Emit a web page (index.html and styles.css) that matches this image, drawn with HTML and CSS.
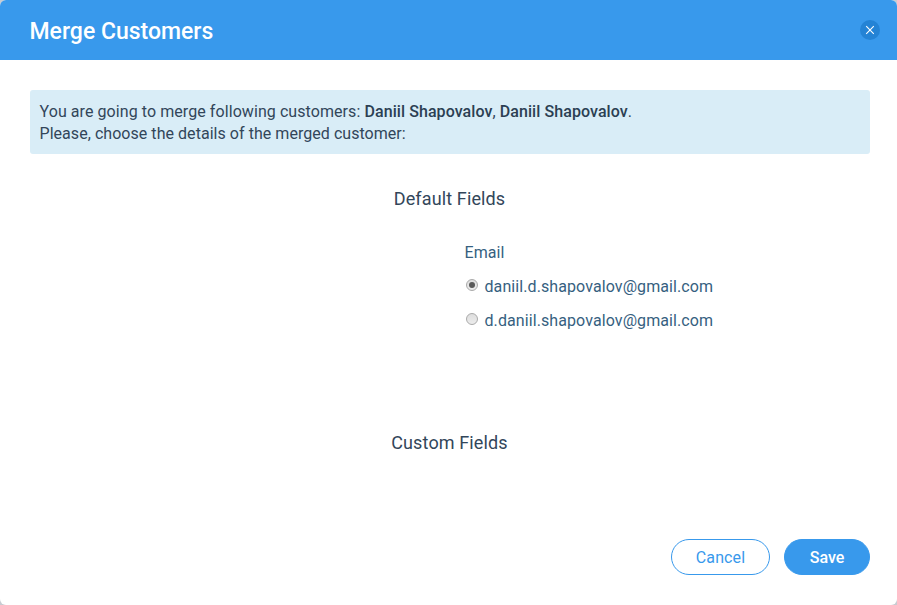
FILE: index.html
```html
<!DOCTYPE html>
<html lang="en">
<head>
<meta charset="utf-8">
<title>Merge Customers</title>
<link rel="stylesheet" href="styles.css">
</head>
<body>
<div class="modal">
  <header class="header">
    <h1 class="title">Merge Customers</h1>
    <button class="close" aria-label="Close"><svg width="10" height="10" viewBox="0 0 10 10"><path d="M1.2 1.2L8.8 8.8M8.8 1.2L1.2 8.8" stroke="#fff" stroke-width="1.1" fill="none"/></svg></button>
  </header>
  <div class="notice">You are going to merge following customers: <b>Daniil Shapovalov</b>, <b>Daniil Shapovalov</b>.<br><span class="hint">Please, choose the details of the merged customer:</span></div>
  <h2 class="section">Default Fields</h2>
  <div class="fields">
    <div class="label">Email</div>
    <label class="option"><span class="radio checked"></span>daniil.d.shapovalov@gmail.com</label>
    <label class="option"><span class="radio"></span>d.daniil.shapovalov@gmail.com</label>
  </div>
  <h2 class="section">Custom Fields</h2>
  <footer class="footer">
    <button class="btn cancel">Cancel</button>
    <button class="btn save">Save</button>
  </footer>
</div>
</body>
</html>
```
FILE: styles.css
```css
* { box-sizing: border-box; }
body { margin: 0; background: #c8ccd2; font: 16px/22px Roboto, sans-serif; color: #32465a; }
.modal { height: 605px; display: flex; flex-direction: column; background: #fff; border-radius: 6px; overflow: hidden; }
.header { height: 60px; flex: none; display: flex; align-items: center; justify-content: space-between; padding: 0 17px 0 29.5px; background: #3899ec; }
.title { margin: 4px 0 0; font-size: 23px; font-weight: 500; line-height: 30px; color: #fff; }
.close { width: 20px; height: 20px; padding: 0; border: 0; border-radius: 50%; background: #2483d5; display: flex; align-items: center; justify-content: center; }
.notice { flex: none; height: 64px; margin: 30px 27px 0 30px; padding: 11px 10px 9px 9.5px; border-radius: 3px; background: #d9edf7; letter-spacing: 0.075px; }
.hint { letter-spacing: 0.045px; }
.notice b { font-weight: 500; color: #2b3f53; }
.section { margin: 33px 0 0; padding-left: 2px; text-align: center; font-size: 18px; line-height: 24px; font-weight: 400; letter-spacing: 0.13px; }
.fields { margin: 31px 0 0 464.5px; height: 156px; color: #365f7f; letter-spacing: 0.09px; }
.label { height: 34px; }
.option { display: flex; height: 34px; align-items: flex-start; }
.radio { width: 12px; height: 12px; margin: 3px 6.5px 0 1.5px; border: 1px solid #aaa; border-radius: 50%; background: linear-gradient(#dedede, #ececec); display: flex; align-items: center; justify-content: center; }
.checked::after { content: ""; width: 6px; height: 6px; border-radius: 50%; background: #5a5a5a; }
.footer { display: flex; gap: 14px; justify-content: flex-end; margin: auto 27px 30px 0; }
.btn { height: 36px; padding: 0; border: 1px solid #3899ec; border-radius: 18px; font: 16px Roboto, sans-serif; }
.cancel { width: 99px; background: #fff; color: #3899ec; letter-spacing: 0.1px; }
.save { width: 86px; background: #3899ec; color: #fff; font-weight: 500; }
```
